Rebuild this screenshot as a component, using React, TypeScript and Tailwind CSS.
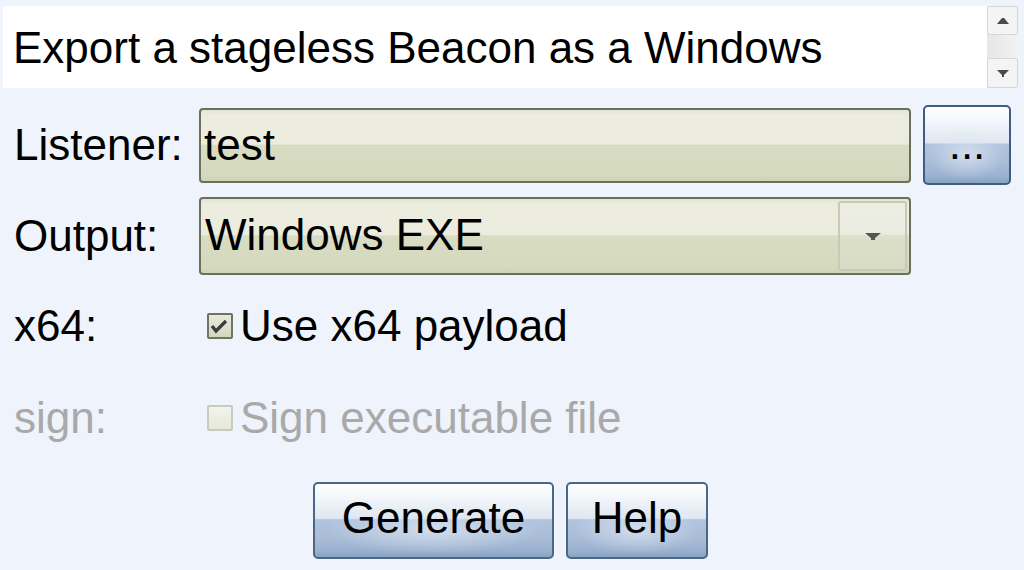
import React from "react";

const fieldBg =
  "bg-[linear-gradient(to_bottom,#e4e6d4_0%,#eceddf_8%,#ebecdd_48%,#d8dcc2_50%,#d5d9be_92%,#cfd3b7_100%)]";
const blueBtn =
  "bg-[radial-gradient(ellipse_45%_35%_at_50%_62%,rgba(220,230,242,0.75),rgba(220,230,242,0)),linear-gradient(to_bottom,#ffffff_0%,#f2f5fa_20%,#dfe7f1_47%,#b2c5de_49%,#a8bcd8_75%,#9cb2d0_90%,#8aa3c4_100%)]";

function Check({ disabled, checked }: { disabled?: boolean; checked?: boolean }) {
  return (
    <div
      className={
        "w-[26px] h-[26px] rounded-[2px] border-2 flex-none " +
        (disabled
          ? "border-[#cacbbe] bg-[linear-gradient(to_bottom,#f3f4ec,#e6e8da)]"
          : "border-[#6f7362] bg-[linear-gradient(to_bottom,#e8eadb,#d3d7be)]")
      }
    >
      {checked && (
        <svg width="22" height="22" viewBox="0 0 22 22">
          <path d="M3 11 L7 16 L17 6" fill="none" stroke="#3a3a3a" strokeWidth="3.2" strokeLinejoin="miter" />
        </svg>
      )}
    </div>
  );
}

export default function App() {
  return (
    <div className="w-[1024px] h-[570px] overflow-hidden bg-[#eff3fb] font-['Liberation_Sans',Arial,sans-serif] text-black pt-[6px]">
      {/* description text area */}
      <div className="ml-[3px] flex h-[82px] w-[1015px]">
        <div className="flex-1 bg-white pl-[10px] pt-[17px] text-[44px] leading-[50px] whitespace-nowrap overflow-hidden">
          Export a stageless Beacon as a Windows
        </div>
        <div className="w-[31px] flex-none flex flex-col bg-[linear-gradient(to_right,#e6e6e6,#f2f2f2)]">
          <div className="h-[29px] border border-[#d6d6d6] bg-[#f4f4f4] rounded-[2px] flex items-center justify-center">
            <svg width="16" height="8" viewBox="0 0 16 8">
              <polygon points="2,7 14,7 9,1 7,1" fill="#4a4a4a" />
            </svg>
          </div>
          <div className="flex-1" />
          <div className="h-[30px] border border-[#d6d6d6] bg-[#f4f4f4] rounded-[2px] flex items-center justify-center">
            <svg width="16" height="9" viewBox="0 0 16 9">
              <polygon points="2,1 14,1 9,6 9,8 7,8 7,6" fill="#4a4a4a" />
            </svg>
          </div>
        </div>
      </div>

      {/* Listener */}
      <div className="mt-[17px] flex items-center h-[80px]">
        <div className="w-[199px] flex-none pl-[14px] text-[44px] leading-[50px] whitespace-nowrap">Listener:</div>
        <div
          className={
            "w-[712px] flex-none h-[75px] rounded-[4px] border-2 border-[#6b6f5e] pl-[3px] flex items-center text-[44px] leading-[50px] " +
            fieldBg
          }
        >
          test
        </div>
        <div
          className={
            "ml-[12px] w-[88px] flex-none h-[80px] rounded-[5px] border-2 border-[#3f5d82] flex items-center justify-center text-[44px] leading-[50px] pb-[2px] " +
            blueBtn
          }
        >
          ...
        </div>
      </div>

      {/* Output */}
      <div className="mt-[12px] flex items-center h-[78px]">
        <div className="w-[199px] flex-none pl-[14px] text-[44px] leading-[50px]">Output:</div>
        <div
          className={
            "w-[712px] flex-none h-[78px] rounded-[4px] border-2 border-[#6b6f5e] pl-[4px] flex items-center text-[44px] leading-[50px] " +
            fieldBg
          }
        >
          <div className="flex-1 pb-[2px]">Windows EXE</div>
          <div className="w-[69px] h-[70px] mr-[2px] rounded-[3px] border-2 border-[#c8cab7] bg-[linear-gradient(to_bottom,#edede3_0%,#ebece1_47%,#dcdfc9_50%,#d9dcc4_100%)] flex items-center justify-center">
            <svg width="18" height="9" viewBox="0 0 18 9">
              <polygon points="1,1 17,1 11,6 11,8 7,8 7,6" fill="#555555" />
            </svg>
          </div>
        </div>
      </div>

      {/* x64 */}
      <div className="mt-[26px] flex items-center h-[50px]">
        <div className="w-[199px] flex-none pl-[14px] text-[44px] leading-[50px]">x64:</div>
        <div className="ml-[8px]">
          <Check checked />
        </div>
        <div className="ml-[7px] text-[44px] leading-[50px] whitespace-nowrap">Use x64 payload</div>
      </div>

      {/* sign */}
      <div className="mt-[42px] flex items-center h-[50px] text-[#a9a9a9]">
        <div className="w-[199px] flex-none pl-[14px] text-[44px] leading-[50px]">sign:</div>
        <div className="ml-[8px]">
          <Check disabled />
        </div>
        <div className="ml-[7px] text-[44px] leading-[50px] whitespace-nowrap">Sign executable file</div>
      </div>

      {/* buttons */}
      <div className="mt-[39px] flex justify-center gap-[12px] pr-[3px]">
        <div
          className={
            "w-[241px] h-[77px] rounded-[5px] border-2 border-[#4c6685] flex items-center justify-center text-[44px] leading-[50px] pb-[5px] " +
            blueBtn
          }
        >
          Generate
        </div>
        <div
          className={
            "w-[142px] h-[77px] rounded-[5px] border-2 border-[#4c6685] flex items-center justify-center text-[44px] leading-[50px] pb-[5px] " +
            blueBtn
          }
        >
          Help
        </div>
      </div>
    </div>
  );
}
